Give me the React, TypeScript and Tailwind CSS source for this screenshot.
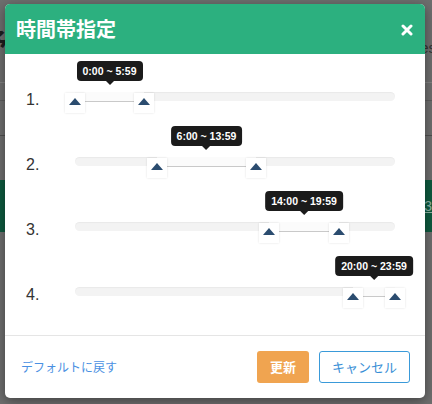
import React from 'react';

type Range = { label: string; from: number; to: number; text: string };

const ranges: Range[] = [
  { label: '1.', from: 0, to: 69, text: '0:00 ~ 5:59' },
  { label: '2.', from: 82, to: 181, text: '6:00 ~ 13:59' },
  { label: '3.', from: 194, to: 264, text: '14:00 ~ 19:59' },
  { label: '4.', from: 278, to: 320, text: '20:00 ~ 23:59' },
];

const Handle: React.FC<{ x: number }> = ({ x }) => (
  <div
    className="absolute top-[1px] w-[20px] h-[20px] bg-white shadow-[0_0_2px_rgba(0,0,0,0.12)] flex justify-center"
    style={{ left: x - 10 }}
  >
    <div className="mt-[5px] w-0 h-0 border-l-[6px] border-r-[6px] border-b-[7px] border-l-transparent border-r-transparent border-b-[#2b4c6f]" />
  </div>
);

const SliderRow: React.FC<{ r: Range }> = ({ r }) => {
  const mid = (r.from + r.to) / 2;
  return (
    <div className="h-[65px] flex items-start">
      <div className="w-[70px] shrink-0 pl-[21px] mt-[36px] text-[16px] leading-[20px] text-[#333]">{r.label}</div>
      <div className="relative w-[320px] h-full">
        {/* tooltip */}
        <div className="absolute top-[7px] flex flex-col items-center" style={{ left: mid, transform: 'translateX(-50%)' }}>
          <div className="h-[20px] px-[6px] rounded-[4px] bg-[#1b1b1b] text-white text-[10.5px] font-bold leading-[20px] whitespace-nowrap">
            {r.text}
          </div>
          <div className="w-0 h-0 border-l-[4px] border-r-[4px] border-t-[4px] border-l-transparent border-r-transparent border-t-[#1b1b1b]" />
        </div>
        {/* track */}
        <div className="absolute top-[38px] left-0 right-0 h-[22px]">
          <div className="absolute top-0 left-0 right-0 h-[9px] rounded-[5px] bg-[#f3f3f3] shadow-[inset_0_1px_1px_rgba(0,0,0,0.04)]" />
          <div
            className="absolute top-0 h-[10px] bg-[#fbfbfb] border-b border-[#c9c9c9]"
            style={{ left: r.from, width: r.to - r.from }}
          />
          <Handle x={r.from} />
          <Handle x={r.to} />
        </div>
      </div>
    </div>
  );
};

const App: React.FC = () => {
  return (
    <div
      className="relative w-[432px] h-[404px] overflow-hidden bg-[#6e6e6e]"
      style={{ fontFamily: '"Liberation Sans", "Noto Sans CJK JP", sans-serif' }}
    >
      {/* dimmed page behind the dialog */}
      <div className="flex flex-col">
        <div className="h-[82px] flex items-start justify-between pt-[30px]">
          <span className="text-[26px] font-bold text-[#1e1e1e] -ml-[18px] leading-[26px]">予約</span>
          <span className="text-[15px] text-[#333] leading-[20px] mt-[8px] -mr-[4px]">es</span>
        </div>
        <div className="h-[18px] border-t border-[#828282]" />
        <div className="h-[35px] border-t border-[#5c5c5c]" />
        <div className="h-[45px] border-t border-[#4f4f4f]" />
        <div className="h-[52px] bg-[#0e5a3f] flex items-center justify-end">
          <span className="text-[14px] text-[#8fb5a6] underline -mr-[4px]">3:</span>
        </div>
        <div className="h-[150px]" />
        <div className="flex">
          <span className="ml-[205px] text-[15px] text-[#222]">3</span>
          <span className="ml-[118px] text-[15px] text-[#222]">607</span>
        </div>
      </div>

      {/* dialog */}
      <div className="absolute left-[5px] top-[4px] w-[420px] h-[394px] bg-white rounded-[5px] overflow-hidden shadow-[0_3px_12px_rgba(0,0,0,0.4)] flex flex-col">
        <div className="h-[50px] bg-[#2cb07f] flex items-center justify-between pl-[11px] pr-[12px]">
          <h1
            className="text-[20px] font-bold text-white leading-none"
            style={{ fontFamily: '"Noto Sans CJK JP", sans-serif' }}
          >
            時間帯指定
          </h1>
          <svg width="12" height="12" viewBox="0 0 12 12" className="mt-[2px]">
            <path d="M2 2 L10 10 M10 2 L2 10" stroke="white" strokeWidth="3" strokeLinecap="round" />
          </svg>
        </div>

        <div className="h-[281px]">
          {ranges.map((r) => (
            <SliderRow key={r.label} r={r} />
          ))}
        </div>

        <div
          className="flex-1 border-t border-[#e5e5e5] flex items-center pl-[16px] pr-[15px]"
          style={{ fontFamily: '"Noto Sans CJK JP", sans-serif' }}
        >
          <span className="text-[12px] text-[#4a90e2]">デフォルトに戻す</span>
          <div className="ml-auto flex gap-[10px]">
            <button className="w-[52px] h-[32px] rounded-[3px] bg-[#f0a450] text-white text-[13px] font-bold">
              更新
            </button>
            <button className="w-[91px] h-[32px] rounded-[3px] border border-[#3a9ad9] bg-white text-[#3a8fd6] text-[13px]">
              キャンセル
            </button>
          </div>
        </div>
      </div>
    </div>
  );
};

export default App;
